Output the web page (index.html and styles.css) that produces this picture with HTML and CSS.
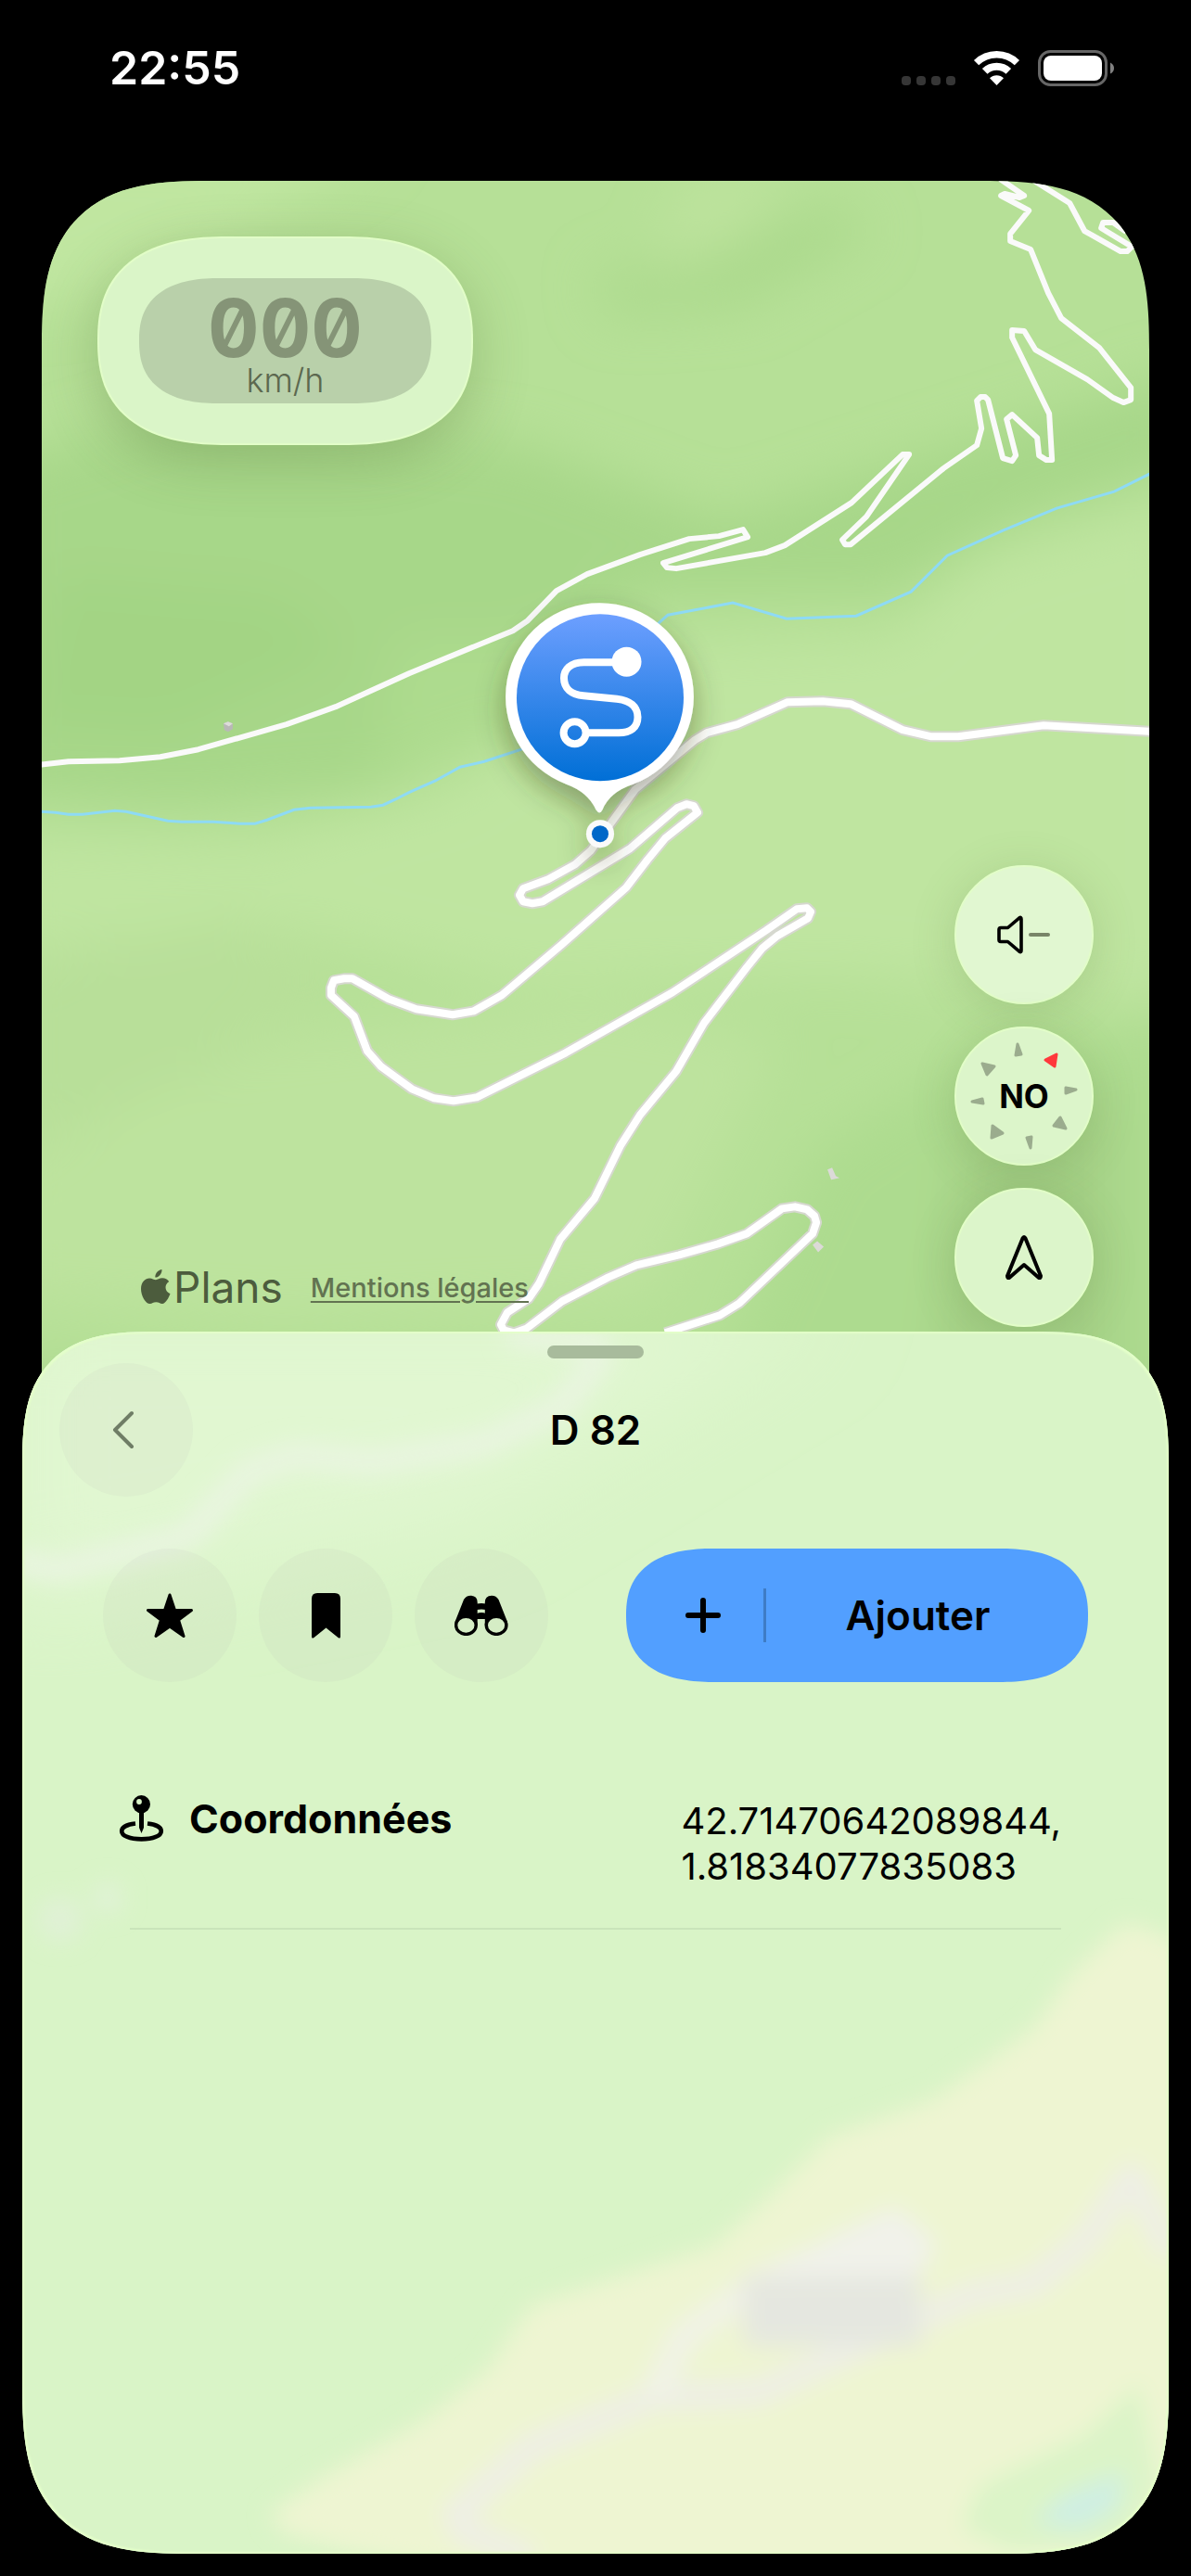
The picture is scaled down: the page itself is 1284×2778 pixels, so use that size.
FILE: index.html
```html
<!DOCTYPE html>
<html lang="fr">
<head>
  <meta charset="UTF-8">
  <meta name="viewport" content="width=device-width, initial-scale=1.0">
  <title>D 82</title>

  <link rel="stylesheet" href="styles.css">
</head>

<body>
  <header class="status-bar">
    <time class="clock">22:55</time>
    <div class="status-icons">
      <svg width="58" height="39" viewBox="0 0 58 39" fill="#363636" aria-hidden="true">
        <rect y="28" width="10" height="10" rx="4"/>
        <rect x="16" y="28" width="10" height="10" rx="4"/>
        <rect x="32" y="28" width="10" height="10" rx="4"/>
        <rect x="48" y="28" width="10" height="10" rx="4"/>
      </svg>
      <svg width="51" height="39" viewBox="0 0 51 39" fill="none" stroke="#fff" aria-hidden="true">
        <path d="M3.6 13.6A31.3 31.3 0 0 1 47.4 13.6" stroke-width="7.5"/>
        <path d="M12.7 22.9A18.3 18.3 0 0 1 38.3 22.9" stroke-width="8"/>
        <path d="M18 30.3A10.5 10.5 0 0 1 33 30.3L25.5 38Z" fill="#fff" stroke="none"/>
      </svg>
      <svg width="83" height="39" viewBox="0 0 83 39" aria-hidden="true">
        <rect x="1.5" y="1.5" width="72" height="36" rx="12" fill="none" stroke="#666" stroke-width="3"/>
        <rect x="6" y="6" width="63" height="27" rx="8" fill="#fff"/>
        <path d="M78 13.5Q82 15.500 82 19.500T78 25.500Z" fill="#808080"/>
      </svg>
    </div>
  </header>

  <main class="map">
    <svg class="map-canvas" viewBox="45 195 1194 1333" preserveAspectRatio="xMidYMin slice" aria-hidden="true">
      <defs>
        <filter id="soft" x="-30%" y="-30%" width="160%" height="160%">
          <feGaussianBlur stdDeviation="28"/>
        </filter>
        <filter id="pin-shadow" x="-50%" y="-30%" width="200%" height="190%">
          <feDropShadow dx="0" dy="14" stdDeviation="16" flood-color="#37401c" flood-opacity=".42"/>
        </filter>
        <linearGradient id="pin-fill" x1="0" y1="0" x2="0" y2="1">
          <stop offset="0" stop-color="#6d9fff"/>
          <stop offset="1" stop-color="#006fd6"/>
        </linearGradient>
        <path id="d82" d="M1245 789L1125 782L1033 794H1003L973 787L917 759L887 756L849 757L795 781L762 790L749 798L685 851L656 891L637 917L620 932L591 948L564 958L560 965L564 972L574 974L585 972L679 915L730 871L740 867L748 869L752 876L717 904L698 927L675 957L606 1018L541 1073L511 1090L488 1094L449 1088L419 1077L380 1055H371L360 1057L357 1065V1073L382 1096L396 1133L411 1150L444 1174L468 1184L489 1187L514 1183L610 1135L725 1070L826 1003L859 980L870 979L874 983L871 990L838 1009L822 1022L805 1043L759 1103L729 1155L690 1202L669 1235L641 1292L604 1336L581 1384L570 1400L547 1415L540 1428L543 1434L554 1437L568 1432L606 1403L656 1377L686 1364L732 1353L774 1341L805 1330L843 1303L857 1301L870 1304L878 1311L880 1318L876 1330L797 1405L776 1418L717 1437"/>
      </defs>

      <!-- relief -->
      <rect x="45" y="195" width="1194" height="1333" fill="#b6e097"/>
      <g filter="url(#soft)">
        <path d="M0 150H420L230 270L60 330H0Z" fill="#c0e6a0"/>
        <path d="M0 500L200 440L560 480L780 560L1060 470L1280 400V500L1100 560L960 640L690 640L430 850L200 870L0 860Z" fill="#a7d789"/>
        <path d="M60 620L300 640L380 700L180 790L30 780Z" fill="#a3d484"/>
        <path d="M640 300L900 220L940 250L800 330L660 340Z" fill="#abd98c"/>
        <path d="M740 190L860 180L800 260L700 300Z" fill="#bde39d"/>
        <path d="M430 690L560 690L680 640L640 760L400 850Z" fill="#addb8e"/>
        <path d="M0 900L280 910L480 850L700 700L960 690L1060 600L1280 540V1080L900 1050L560 1060L300 1000L0 1030Z" fill="#bfe5a0"/>
        <path d="M0 1040L260 990L380 1060L180 1180L0 1240Z" fill="#b8df99"/>
        <path d="M0 1250L300 1120L640 1080L840 1120L700 1400L300 1420L0 1400Z" fill="#bde39e"/>
        <path d="M880 1240L1040 1140L1280 1100V1560H740Z" fill="#addb8f"/>
        <path d="M1040 1200L1200 1180V1540H1000Z" fill="#a4d086"/>
        <path d="M0 1480H1280V1560H0Z" fill="#abd78d"/>
      </g>

      <!-- stream -->
      <path class="stream" d="M45 875L60 876L74 878L89 878L124 874L136 875L181 885L196 886H230L259 888H275L288 884L317 873L335 871L400 870L413 868L426 862L442 854L469 842L496 827L522 821L562 808L711 671L720 663L790 650L848 667L923 664L982 638L1021 599L1081 572L1139 548L1201 530L1239 511"/>

      <!-- tracks -->
      <g class="track">
        <path d="M40 825L74 821L129 820L173 816L214 808L309 781L362 762L397 746L441 726L553 680L569 669L600 637L633 619L690 598L743 581L775 578L801 571L806 579L715 607L719 612L729 613L825 596L846 588L918 542L973 490L980 490L934 557L908 582L911 587H917L1017 505L1053 480L1058 462L1053 432L1057 428H1062L1065 431L1081 494L1091 497L1095 491L1085 452L1091 447L1118 472L1120 491L1128 496H1134L1131 446L1091 364V356L1104 357L1116 377L1172 409L1200 429L1211 434L1219 431V418L1185 375L1144 343L1130 316L1111 269L1089 260V252L1109 227L1079 211L1083 209L1099 213L1104 211L1078 193"/>
        <path d="M1112 193L1118 197L1153 219L1169 249L1208 271H1215L1220 266L1187 246L1189 240H1200L1214 250"/>
      </g>

      <!-- D 82 -->
      <use href="#d82" class="road-case"/>
      <use href="#d82" class="road"/>

      <!-- houses -->
      <path d="M241 780L246 778L251 780V786L246 789L242 787Z" fill="#b9b8b7"/>
      <path d="M241 780L246 778L251 780L247 783Z" fill="#dddcda"/>
      <path d="M892 1261L897 1259L901 1268L905 1270L896 1272Z" fill="#dcdad8"/>
      <path d="M876 1342L881 1338L888 1344L882 1350Z" fill="#dcdad8"/>

      <!-- pin -->
      <g filter="url(#pin-shadow)">
        <path d="M647 650A101 101 0 0 1 682.500 845.500Q657 854 649.500 873Q646.500 879 642.500 873Q634 854 610.500 845.500A101 101 0 0 1 647 650Z" fill="#fff"/>
        <circle cx="647" cy="899" r="15" fill="#fafafa"/>
      </g>
      <circle cx="647" cy="752" r="90" fill="url(#pin-fill)"/>
      <circle cx="647" cy="899" r="9" fill="#0067c8"/>
      <g fill="none" stroke="#fff" stroke-width="8">
        <path d="M664 714H629.500C615 714 608 722 608 731C608 742 616 749 629 750L665 753.500C679 755 687.500 762 687.500 773C687.500 784 680 790 667 790H632"/>
        <circle cx="619.600" cy="790" r="12"/>
        <circle cx="675.500" cy="713.500" r="16" fill="#fff" stroke="none"/>
      </g>
    </svg>

    <div class="speed">
      <div class="speed-screen">
        <strong class="speed-value">000</strong>
        <span class="speed-unit">km/h</span>
      </div>
    </div>

    <div class="map-footer">
      <div class="legal">
        <span class="brand">
          <svg width="32" height="38" viewBox="0 0 32 38" fill="#4c5c3d" aria-hidden="true">
            <path d="M22.500 0C22.800 4.500 19 8.800 15.300 8.600C15 4.300 18.700 .4 22.500 0Z"/>
            <path d="M16 11.200C18 11.200 19.700 9.300 23 9.300C26 9.300 28.800 10.900 30.200 13.100C24.700 16.400 25.600 24 31.500 26.300C30 30.300 26.600 37 23 37C20.300 37 19.400 35.300 16.300 35.300C13.100 35.300 12.100 37 9.600 37C5.200 37 0 28.500 0 20.900C0 13.400 4.700 9.400 9.100 9.400C12 9.400 14.300 11.200 16 11.200Z"/>
          </svg>
          Plans
        </span>
        <a class="legal-link" href="#">Mentions légales</a>
      </div>

      <div class="map-controls">
        <button class="map-button" type="button" aria-label="Son">
          <svg width="60" height="44" viewBox="0 0 60 44" fill="none" stroke-linecap="round" stroke-linejoin="round" aria-hidden="true">
            <path d="M5 14.500H12.500L25 3.800Q27 2.500 27 5V39Q27 41.500 25 40.200L12.500 29.500H5Q3 29.500 3 27.500V16.500Q3 14.500 5 14.500Z" stroke="#000" stroke-width="3.600"/>
            <path d="M37 22H56" stroke="#788568" stroke-width="4"/>
          </svg>
        </button>
        <button class="map-button compass" type="button" aria-label="Boussole, nord-ouest">
          <svg class="compass-ring" viewBox="0 0 150 150" stroke-width="3" stroke-linejoin="round" aria-hidden="true">
            <g fill="#9bac8e" stroke="#9bac8e">
              <path d="M68 19L66 31L72 30Z"/>
              <path d="M120 66V72L131 68Z"/>
              <path d="M114 98L107 107L120 110Z"/>
              <path d="M78 120L83 119L82 131Z"/>
              <path d="M41 107L40 120L52 115Z"/>
              <path d="M19 81L30 78L31 83Z"/>
              <path d="M30 40L43 43L35 52Z"/>
            </g>
            <path d="M98 36L110 30L108 43Z" fill="#ff383c" stroke="#ff383c"/>
          </svg>
          <span class="compass-label">NO</span>
        </button>
        <button class="map-button" type="button" aria-label="Ma position">
          <svg width="44" height="50" viewBox="0 0 44 50" fill="none" stroke="#000" stroke-width="4" stroke-linejoin="round" aria-hidden="true">
            <path d="M20.500 4.500Q22 1.500 23.500 4.500L40 45Q40 47.500 38 47L22 33L6 47Q4 47.500 4 45Z"/>
          </svg>
        </button>
      </div>
    </div>
  </main>

  <section class="sheet">
    <svg class="sheet-backdrop" viewBox="24 1436 1236 1318" preserveAspectRatio="xMidYMid slice" aria-hidden="true">
      <defs>
        <filter id="haze" x="-20%" y="-20%" width="140%" height="140%">
          <feGaussianBlur stdDeviation="12"/>
        </filter>
        <filter id="haze-wide" x="-20%" y="-20%" width="140%" height="140%">
          <feGaussianBlur stdDeviation="50"/>
        </filter>
      </defs>
      <rect x="0" y="1400" width="1284" height="1400" fill="#d9f4c7"/>
      <path d="M0 1400H900L500 1640L0 1740Z" fill="#e1f7d1" filter="url(#haze-wide)"/>
      <g filter="url(#haze)">
        <path d="M1300 2120L1253 2085L1212 2074L1155 2129L1114 2188L1007 2264L893 2305L835 2363L770 2422L573 2486L524 2557L459 2609L344 2674L290 2712L307 2732L369 2750L600 2800H1300Z" fill="#eef5d2"/>
        <path d="M1228 2570L1170 2625L1056 2680L1036 2726L1089 2752L1212 2744L1250 2680Z" fill="#dcf4c8"/>
        <path d="M1114 2722L1147 2691L1212 2665L1205 2705L1165 2728Z" fill="#cfefe3"/>
        <g fill="none" stroke-linejoin="round">
          <path d="M547 1438L640 1448L648 1463L606 1517L522 1557L404 1577L320 1570L269 1587L202 1657L126 1677L63 1693L10 1683" stroke="#e9f5e0" stroke-width="28"/>
          <path d="M573 2760L500 2730L491 2712L573 2639L704 2586L819 2580L909 2539L1048 2475L1114 2463L1171 2416L1220 2346L1262 2430" stroke="#eeefe5" stroke-width="28"/>
          <path d="M704 2586L737 2520L820 2460L960 2405" stroke="#f1f3e6" stroke-width="30"/>
        </g>
        <path d="M830 2450L900 2410L966 2380L1010 2420L980 2470Z" fill="#f1f2ea"/>
        <path d="M802 2455H992V2530H802Z" fill="#e5e7e0"/>
        <circle cx="65" cy="2070" r="24" fill="#e0f1d6"/>
        <circle cx="116" cy="2047" r="16" fill="#e1f2d8"/>
      </g>
    </svg>

    <div class="grabber"></div>

    <header class="sheet-header">
      <button class="round-button back" type="button" aria-label="Retour">
        <svg width="24" height="42" viewBox="0 0 24 42" fill="none" stroke="#6f7d66" stroke-width="4" stroke-linecap="round" stroke-linejoin="round" aria-hidden="true">
          <path d="M21 3L3 21L21 39"/>
        </svg>
      </button>
      <h1 class="sheet-title">D 82</h1>
    </header>

    <div class="actions">
      <button class="round-button" type="button" aria-label="Favori">
        <svg width="50" height="49" viewBox="0 0 50 49" stroke="#000" stroke-width="3" stroke-linejoin="round" aria-hidden="true">
          <path d="M25 2L30.500 18.500H48.500L34.500 29L40 46.500L25 36L10 46.500L15.500 29L1.500 18.500H19.500Z"/>
        </svg>
      </button>
      <button class="round-button" type="button" aria-label="Enregistrer">
        <svg width="31" height="49" viewBox="0 0 31 49" aria-hidden="true">
          <path d="M0 6Q0 0 6 0H25Q31 0 31 6V47Q31 49.500 28.500 48L15.500 37.500L2.500 48Q0 49.500 0 47Z"/>
        </svg>
      </button>
      <button class="round-button" type="button" aria-label="Explorer">
        <svg width="58" height="44" viewBox="0 0 58 44" aria-hidden="true">
          <path d="M.5 29L10 5Q12.500 .7 17.500 .7Q24.700 1 24.700 8V33H.5ZM57 29L47.500 5Q45 .7 40 .7Q32.800 1 32.800 8V33H57Z"/>
          <path d="M24 9.500Q29 8.500 34 9.500V16Q29 15 24 16ZM24 20Q29 18 34 20V26H24Z"/>
          <g fill="#d5edc5" stroke="#000" stroke-width="3.400">
            <ellipse cx="12.400" cy="32.800" rx="10.800" ry="9.600"/>
            <ellipse cx="45.100" cy="32.800" rx="10.800" ry="9.600"/>
          </g>
        </svg>
      </button>
      <button class="add-button" type="button">
        <svg class="plus" width="38" height="38" viewBox="0 0 38 38" stroke="#000" stroke-width="6" stroke-linecap="round" aria-hidden="true">
          <path d="M3 19H35M19 3V35"/>
        </svg>
        <span class="add-label">Ajouter</span>
      </button>
    </div>

    <dl class="details">
      <dt class="detail-name">
        <svg width="49" height="52" viewBox="0 0 49 52" aria-hidden="true">
          <path d="M18 31.500C9 32.500 3.200 35.500 3.200 39.700C3.200 44.800 12 48.400 24.500 48.400S45.800 44.800 45.800 39.700C45.800 35.500 40 32.500 31 31.500" fill="none" stroke="#000" stroke-width="4.600"/>
          <path d="M22 18H27V36L24.500 42L22 36Z"/>
          <circle cx="24.400" cy="10.700" r="9.600"/>
          <circle cx="22" cy="8" r="2.900" fill="#d9f4c7"/>
        </svg>
        Coordonnées
      </dt>
      <dd class="detail-value">42.71470642089844,<br>1.81834077835083</dd>
    </dl>
  </section>
</body>
</html>
```

FILE: styles.css
```css
* {
  box-sizing: border-box;
}

body {
  margin: 0;
  min-height: 100vh;
  display: flex;
  flex-direction: column;
  background-color: #000;
  color: #000;
  font-family: Inter, "Liberation Sans", sans-serif;
}

svg {
  display: block;
  flex: none;
}

button {
  border: none;
  padding: 0;
  font: inherit;
  color: inherit;
  cursor: pointer;
}

/* status bar */
.status-bar {
  height: 195px;
  padding: 43px 82px 0 118px;
  display: flex;
  justify-content: space-between;
  align-items: flex-start;
  color: #fff;
}

.clock {
  font-size: 50px;
  font-weight: 600;
  line-height: 60px;
}

.status-icons {
  display: flex;
  align-items: center;
  gap: 19px;
  height: 60px;
}

/* map */
.map {
  position: relative;
  height: 48vh;
  margin: 0 45px;
  padding: 60px 60px 97px;
  display: flex;
  flex-direction: column;
  justify-content: space-between;
  align-items: flex-start;
  overflow: hidden;
  border-radius: 136px 136px 0 0;
}

.map-canvas {
  position: absolute;
  inset: 0;
  width: 100%;
  height: 100%;
}

.stream {
  fill: none;
  stroke: #8edaf5;
  stroke-width: 3;
}

.track {
  fill: none;
  stroke: #fafafa;
  stroke-width: 6;
  stroke-linejoin: round;
}

.road-case {
  fill: none;
  stroke: #d6d8cf;
  stroke-width: 12;
  stroke-linejoin: round;
}

.road {
  fill: none;
  stroke: #fff;
  stroke-width: 8;
  stroke-linejoin: round;
}

.speed {
  position: relative;
  padding: 43px;
  border-radius: 112px;
  border: 2px solid #e2fdc8;
  background-color: #daf5c8;
  box-shadow: 0 16px 60px rgba(80, 110, 50, .3);
}

.speed-screen {
  width: 315px;
  height: 135px;
  padding-top: 12px;
  display: flex;
  flex-direction: column;
  align-items: center;
  border-radius: 68px;
  background-color: #b9d0aa;
}

.speed-value {
  font-size: 86px;
  font-weight: 700;
  line-height: 84px;
  font-variant-numeric: tabular-nums slashed-zero;
  color: #859477;
}

.speed-unit {
  font-size: 36px;
  font-weight: 300;
  line-height: 28px;
  color: #5c684f;
}

.map-footer {
  position: relative;
  width: 100%;
  display: flex;
  justify-content: space-between;
  align-items: flex-end;
}

.legal {
  display: flex;
  align-items: center;
  gap: 30px;
  padding-left: 47px;
}

.brand {
  display: flex;
  align-items: center;
  gap: 3px;
  font-size: 46px;
  line-height: 86px;
  color: #4c5c3d;
}

.legal-link {
  font-size: 29px;
  font-weight: 500;
  color: #627351;
  text-underline-offset: 4px;
}

.map-controls {
  display: flex;
  flex-direction: column;
  gap: 24px;
}

.map-button {
  position: relative;
  width: 150px;
  height: 150px;
  display: grid;
  place-items: center;
  border-radius: 50%;
  border: 2px solid #e2fdc8;
  background-color: #dcf5ca;
  box-shadow: 0 8px 50px rgba(80, 110, 50, .2);
}

.map-button:first-child {
  background-color: #e1f7d1;
}

.compass-ring {
  position: absolute;
  inset: -2px;
}

.compass-label {
  font-size: 35px;
  font-weight: 700;
}

/* bottom sheet */
.sheet {
  position: relative;
  flex: 1;
  margin: -92px 24px 24px;
  padding-top: 15px;
  overflow: hidden;
  border-radius: 108px 108px 136px 136px;
  background-color: #d9f4c7;
}

.sheet-backdrop {
  position: absolute;
  inset: 0;
  width: 100%;
  height: 100%;
}

.sheet::after {
  content: '';
  position: absolute;
  inset: 0;
  border-radius: inherit;
  box-shadow: inset 0 0 2px 2px #e4ffc9;
  pointer-events: none;
}

.grabber {
  position: relative;
  width: 104px;
  height: 14px;
  margin: 0 auto;
  border-radius: 7px;
  background-color: #a8bb9c;
}

.sheet-header {
  position: relative;
  display: grid;
  grid-template-columns: 144px 1fr 144px;
  align-items: center;
  padding: 5px 40px 0;
}

.sheet-title {
  margin: 0;
  text-align: center;
  font-size: 44px;
  font-weight: 600;
}

.round-button {
  width: 144px;
  height: 144px;
  display: grid;
  place-items: center;
  border-radius: 50%;
  background-color: rgba(100, 70, 130, .035);
}

.back {
  padding-right: 6px;
}

.actions {
  position: relative;
  display: flex;
  gap: 24px;
  margin-top: 56px;
  padding: 0 87px;
}

.add-button {
  width: 498px;
  height: 144px;
  margin-left: auto;
  display: flex;
  align-items: center;
  border-radius: 72px;
  background-color: #529fff;
  font-size: 44px;
  font-weight: 600;
}

.plus {
  margin: 0 46px 0 64px;
}

.add-label {
  flex: 1;
  padding-right: 20px;
  border-left: 3px solid #3e7cc6;
  line-height: 58px;
}

.details {
  position: relative;
  display: flex;
  justify-content: space-between;
  align-items: flex-start;
  margin: 125px 116px 0;
  padding-bottom: 42px;
  border-bottom: 2px solid #c9e4ba;
}

.detail-name {
  display: flex;
  align-items: center;
  gap: 27px;
  margin: -4px 0 0 -12px;
  font-size: 43px;
  font-weight: 700;
  line-height: 49px;
}

.detail-value {
  margin: 0;
  font-size: 40px;
  line-height: 49px;
}

/* smoother corners where the browser can draw them */
@supports (corner-shape: superellipse(1.5)) {
  .map {
    border-radius: 182px 182px 0 0;
    corner-shape: superellipse(1.5);
  }

  .sheet {
    border-radius: 145px 145px 182px 182px;
    corner-shape: superellipse(1.5);
  }

  .sheet::after {
    corner-shape: superellipse(1.5);
  }

  .speed {
    border-radius: 140px / 112px;
    corner-shape: superellipse(1.3);
  }

  .speed-screen {
    border-radius: 88px / 68px;
    corner-shape: superellipse(1.3);
  }

  .add-button {
    border-radius: 96px / 72px;
    corner-shape: superellipse(1.3);
  }
}
```
